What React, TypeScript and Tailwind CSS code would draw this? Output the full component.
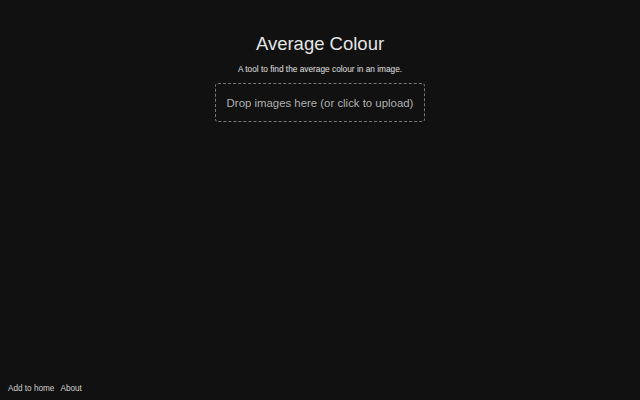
import React from 'react';

const App: React.FC = () => {
  return (
    <div className="flex min-h-screen flex-col bg-[#111111] text-[#e6e6e6]" style={{ fontFamily: '"Liberation Sans", Arial, sans-serif' }}>
      <main className="flex flex-1 flex-col items-center pt-[31px]">
        <h1 className="text-[18.5px] leading-[26px] font-normal text-[#e4e4e4]">Average Colour</h1>
        <p className="mt-[7px] text-[8.3px] leading-[10px] text-[#e0e0e0]">A tool to find the average colour in an image.</p>
        <label className="mt-[9px] flex h-[39px] w-[210px] cursor-pointer items-center justify-center rounded-[3px] border border-dashed border-[#777] pt-[2px] text-[11.4px] text-[#b0b0b0]">
          Drop images here (or click to upload)
          <input type="file" accept="image/*" multiple className="hidden" />
        </label>
      </main>
      <footer className="flex gap-[6px] px-[8px] pb-[6px] text-[8.2px] leading-[10px] text-[#cfcfcf]">
        <a href="#">Add to home</a>
        <a href="#">About</a>
      </footer>
    </div>
  );
};

export default App;
